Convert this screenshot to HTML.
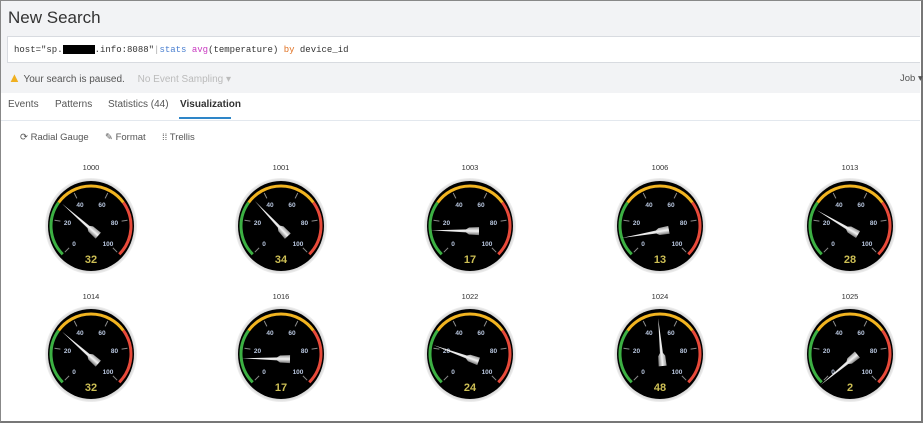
<!DOCTYPE html>
<html><head><style>
body{margin:0;width:923px;height:423px;overflow:hidden;font-family:"Liberation Sans",sans-serif;background:#fff;}
.frame{position:absolute;left:0;top:0;width:920px;height:420px;border:1px solid #888;border-right:2px solid #777;border-bottom:2px solid #777;}
.hdr{position:absolute;left:1px;top:1px;width:919px;height:92px;background:#f2f3f5;}
.title{position:absolute;left:8px;top:8px;font-size:17px;color:#333;}
.search{position:absolute;left:7px;top:36px;width:913px;height:27px;background:#fff;border-top:1px solid #d8dbe0;border-bottom:1px solid #d8dbe0;border-left:1px solid #d8dbe0;font-family:"Liberation Mono",monospace;font-size:9px;line-height:27px;color:#333;padding-left:6px;box-sizing:border-box;}
.k{color:#4a7fd0}.p{color:#c838c0}.o{color:#e07020}
.pause{position:absolute;left:8px;top:70px;font-size:10px;color:#555;white-space:nowrap}
.tabs{position:absolute;left:0;top:99px;font-size:10px;color:#555;}
.tabs span{position:absolute;top:0;white-space:nowrap}
.ul{position:absolute;left:179px;top:117px;width:52px;height:2px;background:#2e86c8;}
.sep{position:absolute;left:1px;top:120px;width:919px;height:1px;background:#e3e8ee;}
.tb{position:absolute;top:132px;font-size:9.5px;color:#555;white-space:nowrap}
.lbl{position:absolute;font-size:7.5px;color:#333;width:40px;text-align:center;}
svg text{font-family:"Liberation Sans",sans-serif;}
</style></head><body>
<div class="frame"></div>
<div class="hdr"></div>
<div class="title">New Search</div>
<div class="search">host="sp.<span style="display:inline-block;width:32px;height:9px;background:#000;vertical-align:middle"></span>.info:8088"<span style="color:#aaa">|</span><span class="k">stats</span> <span class="p">avg</span>(temperature) <span class="o">by</span> device_id</div>
<div class="pause"><span style="color:#f0b020;font-size:13px">&#9650;</span> Your search is paused. <span style="color:#bbb;margin-left:10px">No Event Sampling ▾</span></div>
<div style="position:absolute;left:900px;top:73px;font-size:9.5px;color:#555;white-space:nowrap">Job ▾</div>
<div class="tabs"><span style="left:8px">Events</span><span style="left:55px">Patterns</span><span style="left:108px">Statistics (44)</span><span style="left:180px;color:#333;font-weight:bold">Visualization</span></div>
<div class="ul"></div><div class="sep"></div>
<div class="tb" style="left:20px">⟳ Radial Gauge</div>
<div class="tb" style="left:105px">✎ Format</div>
<div class="tb" style="left:162px">⁞⁞ Trellis</div>

<div class="lbl" style="left:71px;top:163px">1000</div>
<div class="lbl" style="left:261px;top:163px">1001</div>
<div class="lbl" style="left:450px;top:163px">1003</div>
<div class="lbl" style="left:640px;top:163px">1006</div>
<div class="lbl" style="left:830px;top:163px">1013</div>
<div class="lbl" style="left:71px;top:292px">1014</div>
<div class="lbl" style="left:261px;top:292px">1016</div>
<div class="lbl" style="left:450px;top:292px">1022</div>
<div class="lbl" style="left:640px;top:292px">1024</div>
<div class="lbl" style="left:830px;top:292px">1025</div>

<svg width="923" height="423" style="position:absolute;left:0;top:0">
<defs>
<linearGradient id="ng" x1="0" x2="1"><stop offset="0" stop-color="#777"/><stop offset=".5" stop-color="#f4f4f4"/><stop offset="1" stop-color="#999"/></linearGradient>
<radialGradient id="rg"><stop offset=".9" stop-color="#c8c8c8"/><stop offset="1" stop-color="#f0f0f0"/></radialGradient>
<symbol id="g" overflow="visible">
<ellipse cx="0" cy="0" rx="46" ry="48" fill="url(#rg)"/>
<ellipse cx="0" cy="0" rx="43" ry="45" fill="#000"/>
<g fill="none" stroke-width="3">
<path d="M-28.28 28.28 A40 40 0 0 1 -32.36 -23.51" stroke="#3cb043"/>
<path d="M-32.36 -23.51 A40 40 0 0 1 32.36 -23.51" stroke="#f2b420"/>
<path d="M32.36 -23.51 A40 40 0 0 1 28.28 28.28" stroke="#e84a3a"/>
</g>
<g stroke="#888" stroke-width="1">
<path d="M-21.9 21.9L-26.2 26.2M-30.6 -4.85L-36.5 -5.8M-14.1 -27.6L-16.8 -33M14.1 -27.6L16.8 -33M30.6 -4.85L36.5 -5.8M21.9 21.9L26.2 26.2"/>
</g>
<g fill="#b8c6de" font-size="6.5" text-anchor="middle">
<text x="-17" y="20">0</text><text x="-23.5" y="-1">20</text><text x="-11" y="-19">40</text><text x="11" y="-19">60</text><text x="23.5" y="-1">80</text><text x="17" y="20">100</text>
</g>
</symbol>
<path id="n" d="M-4 7 L-3.5 -3 L-1.5 -6 L0 -41 L1.5 -6 L3.5 -3 L4 7 Z" fill="url(#ng)"/>
</defs>
<g font-size="11" font-weight="bold" fill="#cdbf55" text-anchor="middle">
<g transform="translate(91,226)"><use href="#g"/><use href="#n" transform="translate(2,5) rotate(-48.6)"/><text y="37">32</text></g>
<g transform="translate(281,226)"><use href="#g"/><use href="#n" transform="translate(2,5) rotate(-43.2)"/><text y="37">34</text></g>
<g transform="translate(470,226)"><use href="#g"/><use href="#n" transform="translate(2,5) rotate(-89.1)"/><text y="37">17</text></g>
<g transform="translate(660,226)"><use href="#g"/><use href="#n" transform="translate(2,5) rotate(-99.9)"/><text y="37">13</text></g>
<g transform="translate(850,226)"><use href="#g"/><use href="#n" transform="translate(2,5) rotate(-59.4)"/><text y="37">28</text></g>
<g transform="translate(91,354)"><use href="#g"/><use href="#n" transform="translate(2,5) rotate(-48.6)"/><text y="37">32</text></g>
<g transform="translate(281,354)"><use href="#g"/><use href="#n" transform="translate(2,5) rotate(-89.1)"/><text y="37">17</text></g>
<g transform="translate(470,354)"><use href="#g"/><use href="#n" transform="translate(2,5) rotate(-70.2)"/><text y="37">24</text></g>
<g transform="translate(660,354)"><use href="#g"/><use href="#n" transform="translate(2,5) rotate(-5.4)"/><text y="37">48</text></g>
<g transform="translate(850,354)"><use href="#g"/><use href="#n" transform="translate(2,5) rotate(-129.6)"/><text y="37">2</text></g>
</g>
<rect x="1" y="404" width="919" height="17" fill="#fff"/>
</svg>
</body></html>
